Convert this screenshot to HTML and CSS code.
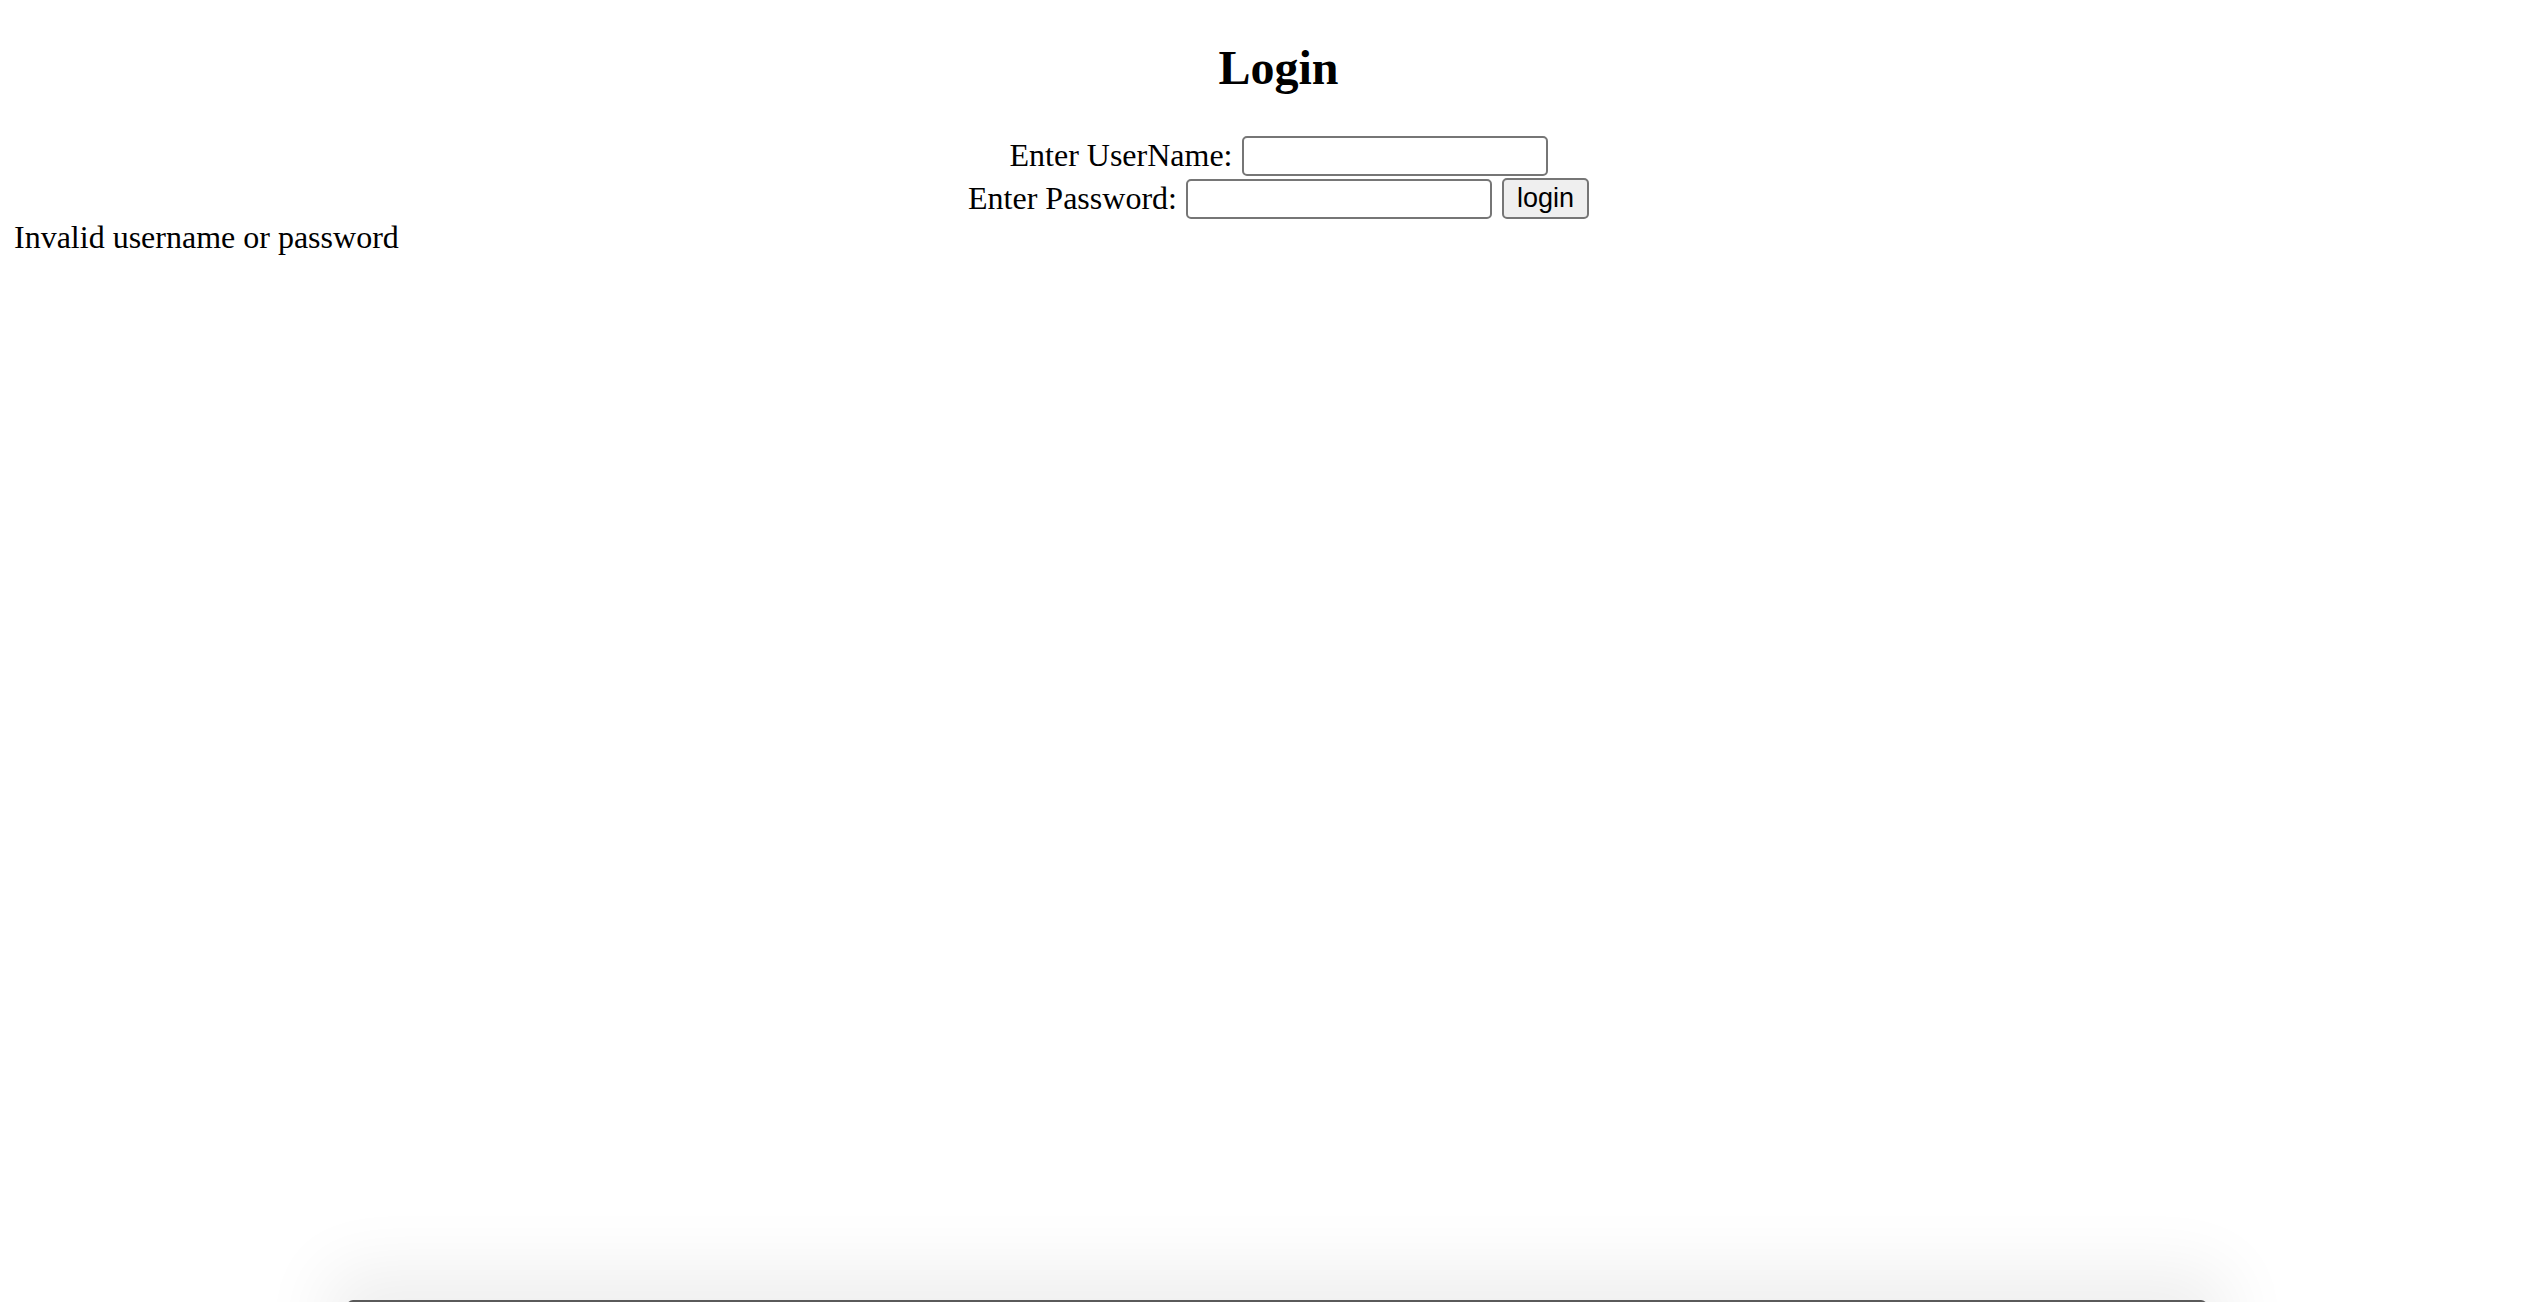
FILE: index.html
```html
<!DOCTYPE html>
<html>
<head>
<meta charset="utf-8">
<title>Login</title>
<link rel="stylesheet" href="styles.css">
</head>
<body>
<h2 class="title">Login</h2>
<form class="login-form">
  <div class="row">
    <label class="label" for="u">Enter UserName:</label>
    <input class="field" id="u" type="text">
  </div>
  <div class="row">
    <label class="label" for="p">Enter Password:</label>
    <input class="field" id="p" type="password">
    <button class="btn" type="button">login</button>
  </div>
</form>
<div class="message">Invalid username or password</div>
<div class="dock"></div>
</body>
</html>
```

FILE: styles.css
```css
html {
  background: #ffffff;
  overflow: hidden;
}
body {
  margin: 0 1px 0 14px;
  font-family: "Liberation Serif", "Times New Roman", serif;
  font-size: 32px;
  color: #000;
}
.title {
  margin: 40px 0 40px 0;
  font-size: 48px;
  font-weight: bold;
  text-align: center;
}
.login-form {
  display: grid;
  grid-auto-rows: 41px;
  row-gap: 2px;
  margin: 0;
}
.row {
  display: flex;
  justify-content: center;
  align-items: center;
  gap: 9px;
}
.label {
  line-height: 1.15;
}
.field {
  box-sizing: border-box;
  width: 306px;
  height: 40px;
  margin: 0;
  padding: 0 6px;
  border: 2px solid #767676;
  border-radius: 5px;
  background: #fff;
  font-size: 26px;
}
.btn {
  box-sizing: border-box;
  width: 87px;
  height: 41px;
  margin: 0 0 0 1px;
  padding: 0;
  border: 2px solid #767676;
  border-radius: 5px;
  background: #efefef;
  color: #000;
  font-family: "Liberation Sans", Arial, sans-serif;
  font-size: 27px;
}
.message {
  line-height: 1.15;
}
.dock {
  position: fixed;
  left: 347px;
  top: 1300px;
  width: 1860px;
  height: 60px;
  background: #5a5a5a;
  border-radius: 6px 6px 0 0;
  box-shadow: 0 -10px 70px 20px rgba(0, 0, 0, 0.07);
}
```
